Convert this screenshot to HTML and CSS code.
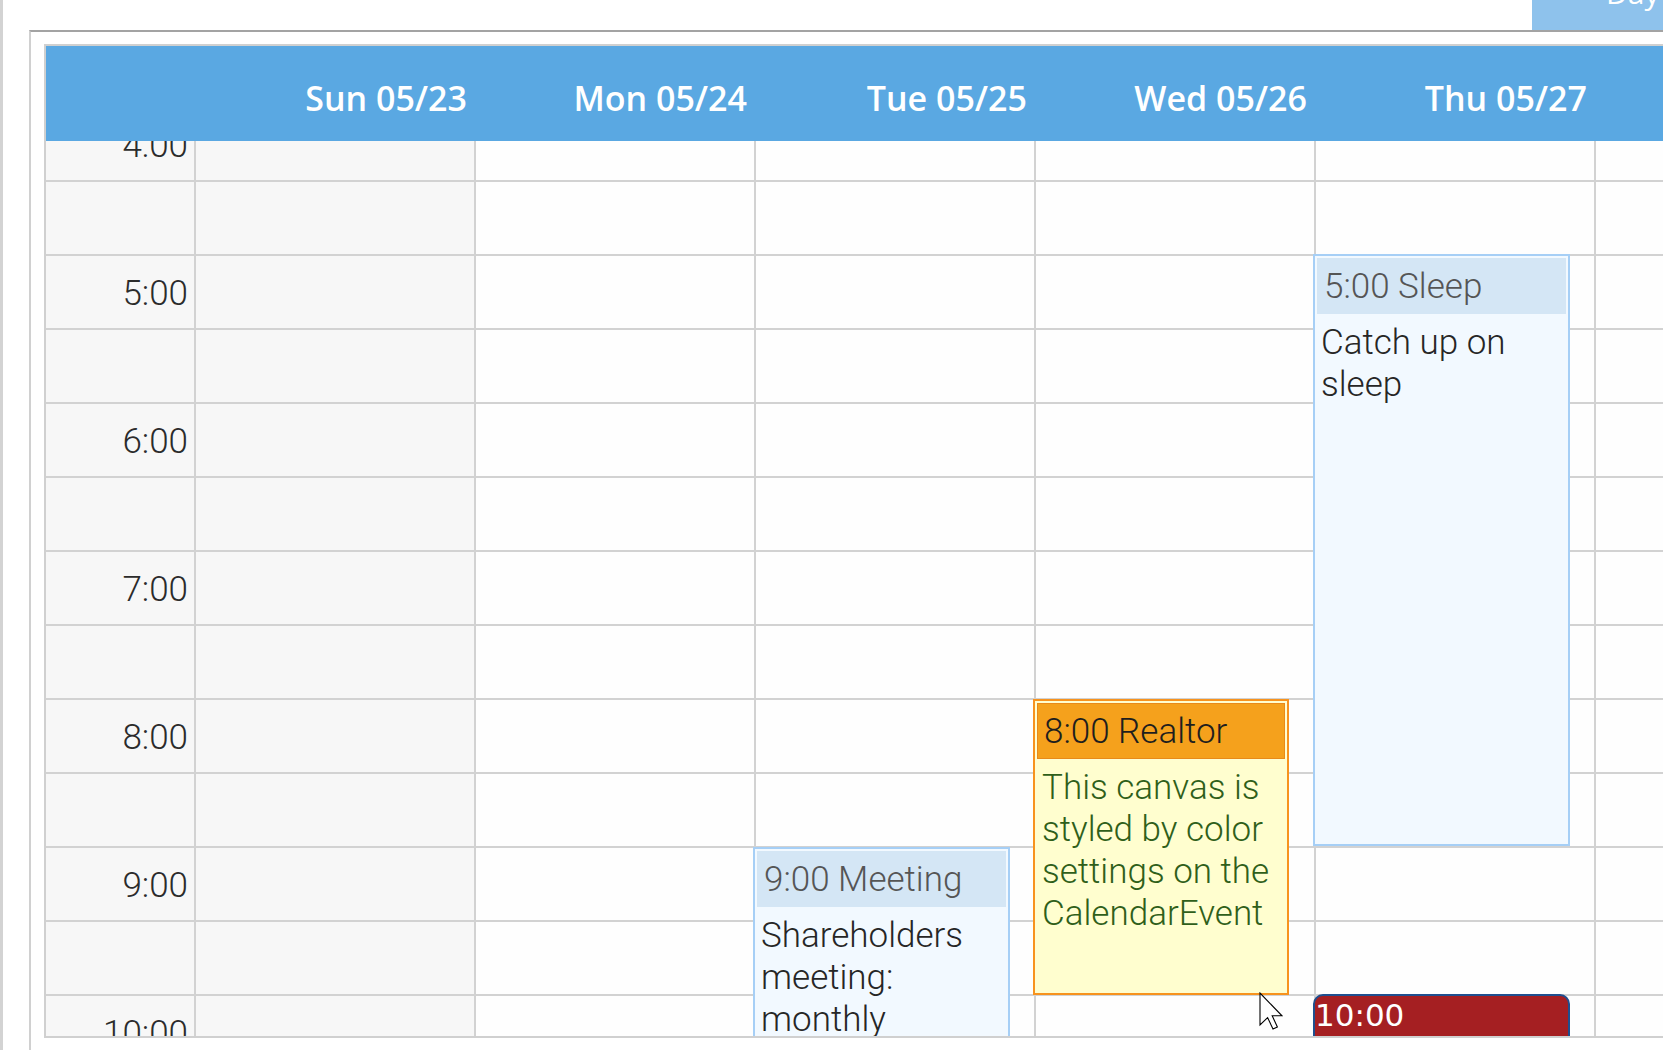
FILE: index.html
```html
<!DOCTYPE html>
<html>
<head>
<meta charset="utf-8">
<title>Calendar</title>
<link rel="stylesheet" href="styles.css">
</head>
<body>
<div class="edge"></div>
<div class="main">
  <div class="tabbar">
    <div class="tab"><span class="tab-label">Day</span></div>
  </div>
  <div class="pane">
    <div class="cal">
      <div class="header">
        <div class="hcell hcell-time"></div>
        <div class="hcell">Sun 05/23</div>
        <div class="hcell">Mon 05/24</div>
        <div class="hcell">Tue 05/25</div>
        <div class="hcell">Wed 05/26</div>
        <div class="hcell">Thu 05/27</div>
        <div class="hcell">Fri 05/28</div>
      </div>
      <div class="body">
        <div class="grid">
          <div class="row"><div class="time">4:00</div><div class="day wkend"></div><div class="day"></div><div class="day"></div><div class="day"></div><div class="day"></div><div class="day"></div></div>
          <div class="row"><div class="time"></div><div class="day wkend"></div><div class="day"></div><div class="day"></div><div class="day"></div><div class="day"></div><div class="day"></div></div>
          <div class="row"><div class="time">5:00</div><div class="day wkend"></div><div class="day"></div><div class="day"></div><div class="day"></div><div class="day"></div><div class="day"></div></div>
          <div class="row"><div class="time"></div><div class="day wkend"></div><div class="day"></div><div class="day"></div><div class="day"></div><div class="day"></div><div class="day"></div></div>
          <div class="row"><div class="time">6:00</div><div class="day wkend"></div><div class="day"></div><div class="day"></div><div class="day"></div><div class="day"></div><div class="day"></div></div>
          <div class="row"><div class="time"></div><div class="day wkend"></div><div class="day"></div><div class="day"></div><div class="day"></div><div class="day"></div><div class="day"></div></div>
          <div class="row"><div class="time">7:00</div><div class="day wkend"></div><div class="day"></div><div class="day"></div><div class="day"></div><div class="day"></div><div class="day"></div></div>
          <div class="row"><div class="time"></div><div class="day wkend"></div><div class="day"></div><div class="day"></div><div class="day"></div><div class="day"></div><div class="day"></div></div>
          <div class="row"><div class="time">8:00</div><div class="day wkend"></div><div class="day"></div><div class="day"></div><div class="day"></div><div class="day"></div><div class="day"></div></div>
          <div class="row"><div class="time"></div><div class="day wkend"></div><div class="day"></div><div class="day"></div><div class="day"></div><div class="day"></div><div class="day"></div></div>
          <div class="row"><div class="time">9:00</div><div class="day wkend"></div><div class="day"></div><div class="day"></div><div class="day"></div><div class="day"></div><div class="day"></div></div>
          <div class="row"><div class="time"></div><div class="day wkend"></div><div class="day"></div><div class="day"></div><div class="day"></div><div class="day"></div><div class="day"></div></div>
          <div class="row"><div class="time">10:00</div><div class="day wkend"></div><div class="day"></div><div class="day"></div><div class="day"></div><div class="day"></div><div class="day"></div></div>

          <div class="ev" style="top:146px; left:1267px; height:592px;">
            <div class="ev-title">5:00 Sleep</div>
            <div class="ev-body">Catch up on sleep</div>
          </div>
          <div class="ev realtor" style="top:591px; left:987px; height:296px;">
            <div class="ev-title">8:00 Realtor</div>
            <div class="ev-body">This canvas is styled by color settings on the CalendarEvent</div>
          </div>
          <div class="ev" style="top:739px; left:707px; height:296px;">
            <div class="ev-title">9:00 Meeting</div>
            <div class="ev-body">Shareholders meeting: monthly</div>
          </div>
          <div class="ev red" style="top:886px; left:1267px; height:148px;">10:00</div>
        </div>
      </div>
    </div>
  </div>
</div>
<svg class="cursor" width="24" height="38" viewBox="0 0 12 19" xmlns="http://www.w3.org/2000/svg">
  <path d="M0.5 0.5 L0.5 16.5 L4.3 12.8 L7 18.5 L9.2 17.5 L6.6 11.9 L11.5 11.9 Z" fill="#ffffff" stroke="#000000" stroke-width="0.55" stroke-linejoin="miter"/>
</svg>
</body>
</html>
```

FILE: styles.css
```css
* {
  box-sizing: border-box;
}

html, body {
  margin: 0;
  padding: 0;
}

body {
  width: 1663px;
  height: 1050px;
  overflow: hidden;
  background: #ffffff;
  display: flex;
  font-family: Roboto, "Open Sans", "DejaVu Sans", sans-serif;
  position: relative;
}

.edge {
  flex: none;
  width: 3px;
  background: #d3d3d3;
}

.main {
  flex: 1;
  min-width: 0;
  margin-left: 26px;
  display: flex;
  flex-direction: column;
}

.tabbar {
  flex: none;
  height: 30px;
  display: flex;
  justify-content: flex-end;
}

.tab {
  width: 131px;
  height: 30px;
  background: #8ec2ec;
  overflow: hidden;
  padding-left: 74px;
  color: #ffffff;
  font-family: "Open Sans", sans-serif;
  font-weight: 400;
  font-size: 30px;
  line-height: 30px;
}

.tab-label {
  display: block;
  margin-top: -22px;
  white-space: nowrap;
}

.pane {
  flex: 1;
  min-width: 0;
  border-top: 2px solid #a3a3a3;
  border-left: 2px solid #d0d0d0;
  padding: 12px 0 0 13px;
  overflow: hidden;
}

.cal {
  border-top: 2px solid #d0d0d0;
  border-left: 2px solid #d0d0d0;
  border-bottom: 2px solid #d0d0d0;
  overflow: hidden;
}

.header {
  display: flex;
  height: 95px;
  background: #5aa8e2;
  overflow: hidden;
}

.hcell {
  flex: none;
  width: 280px;
  display: flex;
  align-items: center;
  justify-content: flex-end;
  padding: 9px 9px 0 0;
  color: #ffffff;
  font-family: "Open Sans", sans-serif;
  font-weight: 600;
  font-size: 34px;
  white-space: nowrap;
}

.hcell-time {
  width: 150px;
}

.body {
  height: 895px;
  overflow: hidden;
}

.grid {
  position: relative;
  margin-top: -33px;
}

.row {
  display: flex;
  height: 74px;
}

.time {
  flex: none;
  width: 150px;
  border-right: 2px solid #d2d2d2;
  border-bottom: 2px solid #d2d2d2;
  background: #f7f7f7;
  display: flex;
  align-items: center;
  justify-content: flex-end;
  padding: 3px 6px 0 0;
  color: #2b2b2b;
  font-family: Roboto, sans-serif;
  font-weight: 300;
  font-size: 35px;
  line-height: 41px;
}

.day {
  flex: none;
  width: 280px;
  border-right: 2px solid #d2d2d2;
  border-bottom: 2px solid #d2d2d2;
  background: #fefefe;
}

.day.wkend {
  background: #f7f7f7;
}

.ev {
  position: absolute;
  width: 257px;
  border: 2px solid #a6cff6;
  background: #f2f9ff;
  padding: 2px;
  overflow: hidden;
  z-index: 2;
}

.ev-title {
  height: 56px;
  background: #d4e6f5;
  padding-left: 7px;
  display: flex;
  align-items: center;
  white-space: nowrap;
  color: #555555;
  font-family: Roboto, sans-serif;
  font-weight: 300;
  font-size: 35px;
  line-height: 41px;
}

.ev-body {
  padding: 8px 4px 0 4px;
  color: #262626;
  font-family: Roboto, sans-serif;
  font-weight: 300;
  font-size: 35px;
  line-height: 42px;
}

.ev.realtor {
  width: 256px;
  border-color: #f7931e;
  background: #fffecf;
}

.realtor .ev-title {
  background: #f5a11c;
  border: 1px solid #e88a1a;
  padding-left: 6px;
  color: #1e1e1e;
}

.realtor .ev-body {
  color: #2f5f1a;
  padding-left: 5px;
}

.ev.red {
  border-color: #1f4f8f;
  background: #a51f22;
  border-radius: 10px 10px 0 0;
  padding: 1px 0 0 0;
  color: #ffffff;
  font-family: "DejaVu Sans", sans-serif;
  font-size: 31px;
  line-height: normal;
}

.cursor {
  position: absolute;
  left: 1259px;
  top: 992px;
  z-index: 10;
}
```
